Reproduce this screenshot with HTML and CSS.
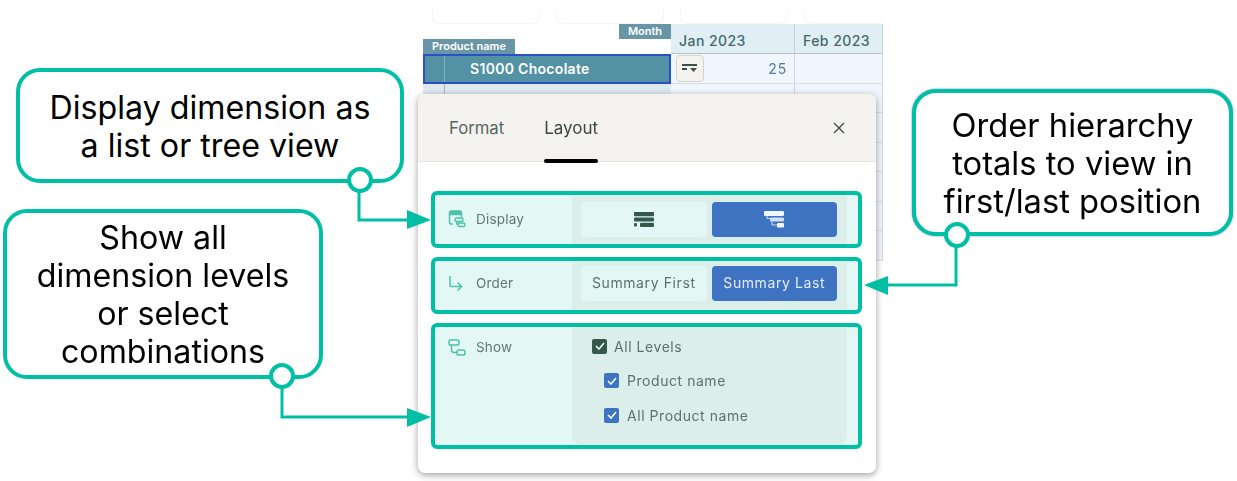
FILE: index.html
```html
<!DOCTYPE html>
<html lang="en">
<head>
<meta charset="utf-8">
<title>Layout panel</title>
<link rel="stylesheet" href="styles.css">
</head>
<body>
<main class="canvas">
  <div class="filters"><span class="chip"></span><span class="chip"></span><span class="chip"></span><span class="chip"></span></div>
  <section class="grid">
    <div class="corner">
      <span class="tag tag-month">Month</span>
      <span class="tag tag-product">Product name</span>
    </div>
    <div class="col-head">Jan 2023</div>
    <div class="col-head">Feb 2023</div>
    <div class="row-head selected"><span class="tick"></span><span class="row-label">S1000 Chocolate</span></div>
    <div class="cell first">
      <span class="cell-btn"><svg width="16" height="8" viewBox="0 0 16 8"><path d="M0 1h15M0 5h5" stroke="#3d4f49" stroke-width="2"/><path d="M8 4h7l-3.500 4z" fill="#3d4f49"/></svg></span>
      <span class="num">25</span>
    </div>
    <div class="cell"></div>
    <div class="row-head"><span class="tick"></span></div><div class="cell"></div><div class="cell"></div>
    <div class="row-head"><span class="tick"></span></div><div class="cell"></div><div class="cell"></div>
    <div class="row-head"><span class="tick"></span></div><div class="cell"></div><div class="cell"></div>
    <div class="row-head"><span class="tick"></span></div><div class="cell"></div><div class="cell"></div>
    <div class="row-head"><span class="tick"></span></div><div class="cell"></div><div class="cell"></div>
    <div class="row-head"><span class="tick"></span></div><div class="cell"></div><div class="cell"></div>
  </section>

  <section class="panel">
    <header class="panel-head">
      <span class="tab">Format</span>
      <span class="tab active">Layout</span>
      <svg class="close" width="12" height="12" viewBox="0 0 12 12"><path d="M1 1l10 10M11 1L1 11" stroke="#3d4f49" stroke-width="1.400" fill="none"/></svg>
    </header>
    <div class="panel-body">
      <div class="opt opt-display">
        <div class="opt-label">
          <svg class="opt-icon" width="18" height="18" viewBox="0 0 18 18" fill="none" stroke="#4cc2aa" stroke-width="1.400"><path d="M1.500 4.500V2.800Q1.500 1 3.300 1h8.400Q13.500 1 13.500 2.800V4.500z" fill="#4cc2aa"/><path d="M1.500 4.500v8q0 1.500 1.500 1.500H5"/><path d="M13.500 4.500V7"/><rect x="7" y="8" width="8" height="3.500" rx="1.500"/><rect x="10" y="13" width="7" height="3.500" rx="1.500"/><path d="M8.500 11.500v1q0 2 1.500 2"/></svg>
          <span>Display</span>
        </div>
        <div class="opt-ctl">
          <span class="btn"><svg width="20" height="15" viewBox="0 0 20 15" fill="#34594c"><rect width="20" height="4.200" rx="1"/><rect y="5.400" width="20" height="4.200" rx="1"/><rect y="11" width="3" height="3.400" rx="1.200"/><rect x="6" y="10.800" width="14" height="4.200" rx="1"/></svg></span>
          <span class="btn on"><svg width="20" height="17" viewBox="0 0 20 17" fill="none"><rect width="20" height="5" rx="1" fill="#f0f6fd"/><rect x="6" y="6.500" width="14" height="4" rx="1" fill="#cfe0f5"/><rect x="13" y="12" width="7" height="4.500" rx="1" fill="#f0f6fd"/><path d="M3 5v2.500h3M8 10.500v3.500h5" stroke="#cfe0f5" stroke-width="1"/></svg></span>
        </div>
      </div>
      <div class="opt opt-order">
        <div class="opt-label">
          <svg class="opt-icon" width="18" height="18" viewBox="0 0 18 18" fill="none" stroke="#4cc2aa" stroke-width="1.500"><path d="M2 2v9.500q0 1 1 1h10.500M9.500 8.500l4 4-4 4"/></svg>
          <span>Order</span>
        </div>
        <div class="opt-ctl">
          <span class="btn label">Summary First</span>
          <span class="btn label on">Summary Last</span>
        </div>
      </div>
      <div class="opt opt-show">
        <div class="opt-label">
          <svg class="opt-icon" width="18" height="18" viewBox="0 0 18 18" fill="none" stroke="#4cc2aa" stroke-width="1.500"><rect x="1" y="1" width="10" height="5" rx="1.800"/><rect x="9" y="11" width="8" height="5" rx="1.800"/><path d="M3.500 6v5q0 2.500 2.500 2.500h3"/></svg>
          <span>Show</span>
        </div>
        <div class="opt-ctl checks">
          <label class="check"><span class="box dark"><svg width="10" height="8" viewBox="0 0 10 8"><path d="M1 4l3 3 5-6" stroke="#fff" stroke-width="1.500" fill="none"/></svg></span>All Levels</label>
          <label class="check sub"><span class="box"><svg width="10" height="8" viewBox="0 0 10 8"><path d="M1 4l3 3 5-6" stroke="#fff" stroke-width="1.500" fill="none"/></svg></span>Product name</label>
          <label class="check sub"><span class="box"><svg width="10" height="8" viewBox="0 0 10 8"><path d="M1 4l3 3 5-6" stroke="#fff" stroke-width="1.500" fill="none"/></svg></span>All Product name</label>
        </div>
      </div>
    </div>
  </section>

  <svg class="wires" width="1237" height="481" viewBox="0 0 1237 481">
    <g fill="none" stroke="#00bfa5" stroke-width="3">
      <path d="M359 190V220H410"/>
      <path d="M282 386V417H410"/>
      <path d="M956 246V285H880"/>
    </g>
    <g fill="#00bfa5">
      <path d="M407 210L431 220L407 229z"/>
      <path d="M407 408L431 417L407 427z"/>
      <path d="M864 285L888 276V295z"/>
    </g>
  </svg>

  <div class="note note-a">Display dimension as<br>a list or tree view<span class="dot"></span></div>
  <div class="note note-b">Show all<br>dimension levels<br>or select<br>combinations<span class="dot"></span></div>
  <div class="note note-c">Order hierarchy<br>totals to view in<br>first/last position<span class="dot"></span></div>
</main>
</body>
</html>
```
FILE: styles.css
```css
* { box-sizing: border-box; }
html, body { margin: 0; background: #fff; }
.canvas {
  position: relative;
  width: 1237px;
  height: 481px;
  overflow: hidden;
  font-family: Inter, "Liberation Sans", sans-serif;
}

/* background table */
.filters {
  position: absolute;
  left: 432px;
  top: 10px;
  display: flex;
  gap: 16px;
  width: 451px;
  overflow: hidden;
}
.chip {
  flex: none;
  width: 108px;
  height: 14px;
  background: #fff;
  border: 1px solid #f6f6f6;
  border-top: 0;
  border-radius: 0 0 6px 6px;
}
.grid {
  position: absolute;
  left: 423px;
  top: 24px;
  display: grid;
  grid-template-columns: 248px 124px 88px;
  grid-template-rows: 30px repeat(7, 29.500px);
  font-weight: 500;
  filter: blur(.3px);
}
.corner { position: relative; background: #fff; }
.tag {
  position: absolute;
  background: #6996a6;
  color: #fff;
  font-size: 11px;
  font-weight: 600;
  line-height: 15px;
  white-space: nowrap;
}
.tag-month { right: 0; top: 0; width: 52px; text-align: center; }
.tag-product { left: 0; top: 15px; width: 92px; text-align: center; }
.col-head {
  display: flex;
  align-items: center;
  padding: 4px 0 0 8px;
  background: #e1eef3;
  border-right: 1px solid #c8d2d4;
  border-bottom: 1px solid #b9c2c3;
  color: #3e6a6e;
  font-size: 14px;
  letter-spacing: .45px;
}
.row-head {
  display: flex;
  align-items: center;
  background: #dde9ef;
  border-bottom: 1px solid #c8d8dd;
}
.row-head .tick { align-self: stretch; width: 1px; margin-left: 21px; background: #a9b9bd; }
.row-head.selected {
  background: #5391a4;
  border: 2px solid #2b50c4;
  color: #fff;
  font-size: 14px;
  font-weight: 600;
  letter-spacing: .3px;
}
.selected .tick { margin-left: 19px; background: #86b1bd; }
.row-label { margin-left: 25px; }
.cell {
  display: flex;
  align-items: center;
  justify-content: space-between;
  background: #f0f6fd;
  border-right: 1px solid #d2dadc;
  border-bottom: 1px solid #d6dfe3;
}
.cell.first { padding: 0 7px 0 5px; }
.cell-btn {
  display: flex;
  align-items: center;
  justify-content: center;
  width: 28px;
  height: 27px;
  background: #f5f3ef;
  border: 1.500px solid #d5d5cc;
  border-radius: 4px;
}
.num { color: #4d7aa7; font-size: 14px; font-weight: 400; letter-spacing: .8px; }

/* panel */
.panel {
  position: absolute;
  left: 418px;
  top: 94px;
  width: 458px;
  height: 379px;
  background: #fff;
  border-radius: 7px;
  box-shadow: 0 2px 7px rgba(40, 40, 40, .45);
  overflow: hidden;
}
.panel-head {
  position: relative;
  display: flex;
  align-items: center;
  gap: 40px;
  height: 68px;
  padding: 0 0 0 31px;
  background: #f5f3ef;
  border-bottom: 1px solid #e6e4de;
  filter: blur(.3px);
}
.tab { position: relative; color: #55675f; font-size: 16.700px; line-height: 68px; }
.tab.active { color: #3a4641; font-size: 17px; }
.tab.active::after {
  content: "";
  position: absolute;
  left: 0;
  right: 0;
  bottom: -1px;
  height: 3.500px;
  background: #000;
  border-radius: 2px;
}
.close { margin-left: auto; margin-right: 31px; }
.panel-body {
  display: flex;
  flex-direction: column;
  gap: 9px;
  padding: 29px 14px 0 13px;
}
.opt {
  display: flex;
  height: 57px;
  background: #e3f8f5;
  border: 4px solid #00bfa5;
  border-radius: 6px;
}
.opt-show { height: 126px; }
.opt-label {
  display: flex;
  align-items: center;
  gap: 10px;
  width: 137px;
  padding-left: 13px;
  color: #5e7a72;
  font-size: 13.500px;
  letter-spacing: .2px;
}
.opt-display .opt-label { padding-bottom: 1px; }
.opt-order .opt-label { padding-bottom: 5px; }
.opt-show .opt-label { align-items: flex-start; padding-top: 12px; }
.opt-ctl {
  display: flex;
  align-items: center;
  gap: 5px;
  width: 275px;
  padding: 0 10px 0 9px;
  background: #dceee9;
}
.opt-order .opt-ctl { padding-bottom: 4px; }
.btn {
  display: flex;
  flex: 1 1 0;
  align-items: center;
  justify-content: center;
  height: 35px;
  background: #e3f8f5;
  border-radius: 4px;
  color: #5c716b;
  font-size: 14px;
  letter-spacing: .6px;
  white-space: nowrap;
}
.btn.label { padding-bottom: 2px; }
.btn.on { background: #3d73c1; color: #e4edf9; }
.checks {
  flex-direction: column;
  align-items: flex-start;
  gap: 0;
  padding: 2px 0 0 20px;
  border-radius: 0 0 10px 10px;
}
.check {
  display: flex;
  align-items: center;
  gap: 8px;
  height: 34.500px;
  color: #5c716b;
  font-size: 14px;
  letter-spacing: .55px;
}
.check:first-child { gap: 7px; }
.check.sub { padding-left: 12px; }
.box {
  display: flex;
  align-items: center;
  justify-content: center;
  width: 15px;
  height: 15px;
  background: #3d73c1;
  border-radius: 2px;
}
.box.dark { background: #34594c; }
.opt-label, .opt-ctl { filter: blur(.3px); }

/* annotations */
.wires { position: absolute; left: 0; top: 0; pointer-events: none; }
.note {
  position: absolute;
  display: flex;
  flex-direction: column;
  justify-content: center;
  background: #fff;
  border: 4px solid #00bfa5;
  border-radius: 24px;
  color: #000;
  font-size: 32.200px;
  line-height: 38px;
  text-align: center;
  padding-top: 2px;
}
.note-a { left: 16px; top: 68px; width: 388px; height: 115px; }
.note-b { left: 3px; top: 209px; width: 320px; height: 170px; }
.note-c { left: 912px; top: 89px; width: 321px; height: 147px; box-shadow: 0 0 2px #4d72c8; font-size: 32.700px; padding-top: 0; }
.dot {
  position: absolute;
  width: 26px;
  height: 26px;
  background: #fff;
  border: 4px solid #00bfa5;
  border-radius: 50%;
}
.note-a .dot { left: 327px; top: 95px; }
.note-b .dot { left: 262px; top: 150px; }
.note-c .dot { left: 28px; top: 129px; }
```
